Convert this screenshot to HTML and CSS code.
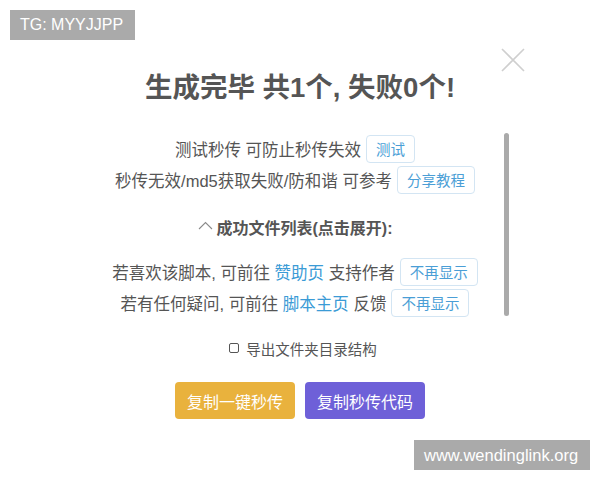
FILE: index.html
```html
<!DOCTYPE html>
<html lang="zh">
<head>
<meta charset="utf-8">
<title>秒传</title>
<link rel="stylesheet" href="styles.css">
</head>
<body>
<div class="page">
  <div class="badge badge-tg">TG: MYYJJPP</div>
  <svg class="close" width="24" height="24" viewBox="0 0 24 24"><path d="M1 1 L23 23 M23 1 L1 23" stroke="#cfcfcf" stroke-width="1.6" fill="none"/></svg>

  <h1 class="title">生成完毕 共1个, 失败0个!</h1>

  <div class="scroll-area">
    <div class="content">
      <div class="row"><span>测试秒传 可防止秒传失效</span><span class="mini-btn">测试</span></div>
      <div class="row"><span>秒传无效/md5获取失败/防和谐 可参考</span><span class="mini-btn">分享教程</span></div>
      <div class="row collapse">
        <svg class="chev" width="15" height="9" viewBox="0 0 15 9"><polyline points="1,8 7.5,1.5 14,8" fill="none" stroke="#8a8a8a" stroke-width="1.1"/></svg>
        <span>成功文件列表(点击展开):</span>
      </div>
      <div class="row gap-top"><span>若喜欢该脚本, 可前往 <span class="link">赞助页</span> 支持作者</span><span class="mini-btn">不再显示</span></div>
      <div class="row"><span>若有任何疑问, 可前往 <span class="link">脚本主页</span> 反馈</span><span class="mini-btn">不再显示</span></div>
    </div>
    <div class="scrollbar"></div>
  </div>

  <div class="check-line"><span class="checkbox"></span><span>导出文件夹目录结构</span></div>

  <div class="actions">
    <button class="btn btn-yellow">复制一键秒传</button>
    <button class="btn btn-purple">复制秒传代码</button>
  </div>

  <div class="badge badge-site">www.wendinglink.org</div>
</div>
</body>
</html>
```
FILE: styles.css
```css
* { box-sizing: border-box; }
html, body { margin: 0; padding: 0; background: #fff; }
body {
  font-family: "Liberation Sans", "Noto Sans CJK SC", sans-serif;
  color: #555;
}
.page {
  position: relative;
  width: 600px;
  height: 480px;
  padding-top: 70px;
  overflow: hidden;
}
.badge {
  position: absolute;
  background: #aaaaaa;
  color: #fff;
  font-size: 16px;
  height: 30px;
  line-height: 30px;
  padding: 0 10px;
  white-space: nowrap;
}
.badge-tg { left: 10px; top: 10px; width: 125px; }
.badge-site { left: 414px; top: 440px; width: 176px; font-size: 16.5px; }
.close { position: absolute; left: 501px; top: 48px; }

.title {
  margin: 0;
  height: 36px;
  line-height: 36px;
  text-align: center;
  font-size: 27.5px;
  font-weight: bold;
  color: #555;
}
.scroll-area {
  display: flex;
  margin: 27px 0 0 90px;
  width: 419px;
  height: 186px;
}
.content {
  width: 410px;
  overflow: hidden;
  font-size: 16.5px;
}
.row {
  display: flex;
  justify-content: center;
  align-items: center;
  height: 31px;
  gap: 5px;
  white-space: nowrap;
}
.mini-btn {
  display: inline-flex;
  align-items: center;
  height: 28px;
  padding: 0 9px;
  border: 1px solid #d3e5f3;
  border-radius: 4px;
  color: #4a9ed6;
  font-size: 14.5px;
  background: #fff;
}
.link { color: #3b9bd6; }
.collapse {
  margin-top: 20px;
  height: 24px;
  gap: 4px;
  font-weight: bold;
  font-size: 16px;
}
.chev { margin-top: -4px; }
.gap-top { margin-top: 17px; }
.scrollbar {
  width: 5px;
  height: 183px;
  margin-left: 4px;
  background: #aaaaaa;
  border-radius: 3px;
}
.check-line {
  display: flex;
  justify-content: center;
  align-items: center;
  gap: 7px;
  height: 20px;
  margin-top: 19px;
  padding-left: 6px;
  font-size: 14.5px;
}
.checkbox {
  width: 10px;
  height: 10px;
  border: 1px solid #555;
  border-radius: 2px;
}
.actions {
  display: flex;
  justify-content: center;
  gap: 10px;
  margin-top: 24px;
}
.btn {
  width: 120px;
  height: 37px;
  border: none;
  border-radius: 4px;
  color: #fff;
  font-family: "Liberation Sans", "Noto Sans CJK SC", sans-serif;
  font-size: 16px;
}
.btn-yellow { background: #e9b23d; }
.btn-purple { background: #6e60d8; }
```
